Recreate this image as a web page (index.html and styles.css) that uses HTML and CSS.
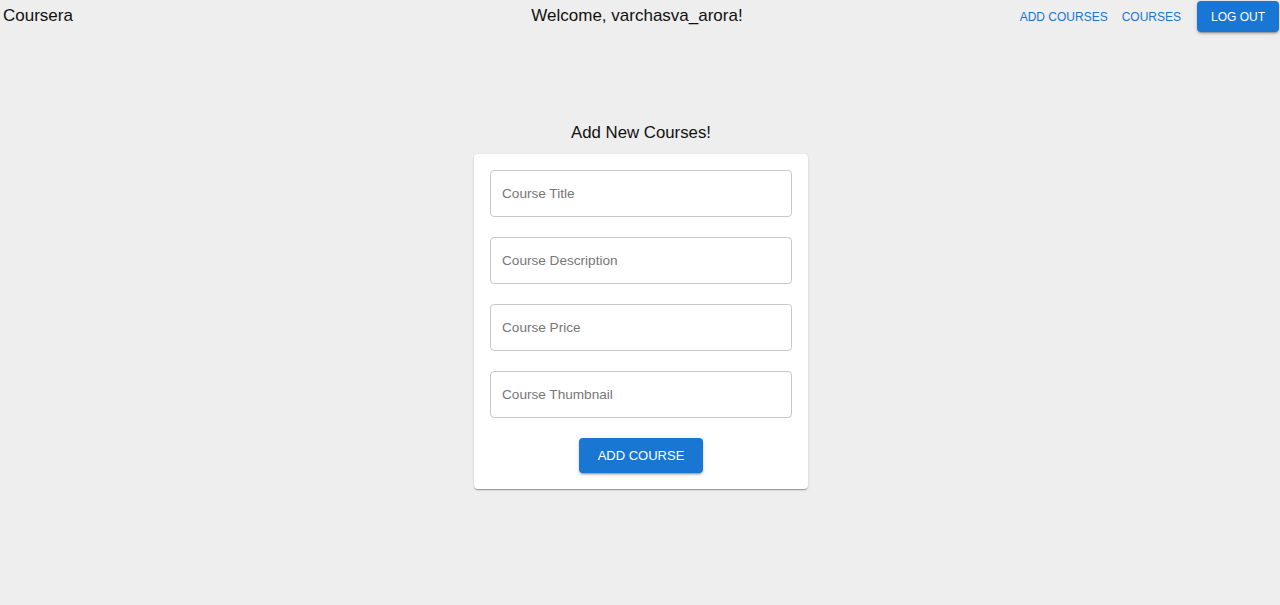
FILE: index.html
```html
<!DOCTYPE html>
<html lang="en">
<head>
<meta charset="utf-8">
<title>Coursera - Add Course</title>
<link rel="stylesheet" href="styles.css">
</head>
<body>
<header class="topbar">
  <div class="brand">Coursera</div>
  <div class="welcome">Welcome, varchasva_arora!</div>
  <nav class="nav">
    <a class="nav-link" href="#">ADD COURSES</a>
    <a class="nav-link" href="#">COURSES</a>
    <button class="btn btn-logout" type="button">LOG OUT</button>
  </nav>
</header>
<main class="main">
  <h1 class="title">Add New Courses!</h1>
  <form class="card">
    <input class="field" type="text" placeholder="Course Title">
    <input class="field" type="text" placeholder="Course Description">
    <input class="field" type="text" placeholder="Course Price">
    <input class="field" type="text" placeholder="Course Thumbnail">
    <div class="actions">
      <button class="btn btn-add" type="button">ADD COURSE</button>
    </div>
  </form>
</main>
</body>
</html>
```

FILE: styles.css
```css
html, body {
  margin: 0;
  padding: 0;
}
body {
  background: #eeeeee;
  font-family: "Liberation Sans", Arial, sans-serif;
  color: #111;
  min-height: 605px;
}
.topbar {
  display: grid;
  grid-template-columns: 1fr auto 1fr;
  align-items: baseline;
  padding: 1px 1px 0 3px;
  height: 31px;
}
.brand {
  font-size: 17px;
  justify-self: start;
}
.welcome {
  font-size: 17px;
  margin-right: 8px;
}
.nav {
  justify-self: end;
  display: flex;
  align-items: baseline;
}
.nav-link {
  font-size: 12px;
  color: #1976d2;
  text-decoration: none;
  padding: 0 7px;
}
.btn {
  font-family: "Liberation Sans", Arial, sans-serif;
  border: none;
  background: #1976d2;
  color: #fff;
  border-radius: 4px;
  cursor: pointer;
  box-shadow: 0 3px 1px -2px rgba(0,0,0,0.2), 0 2px 2px 0 rgba(0,0,0,0.14), 0 1px 5px 0 rgba(0,0,0,0.12);
}
.btn-logout {
  font-size: 12px;
  height: 31px;
  line-height: 30px;
  padding: 1px 14px 0;
  width: 82px;
  margin-left: 9px;
}
.main {
  display: flex;
  flex-direction: column;
  align-items: center;
  padding-top: 89px;
}
.title {
  margin: 0 0 9px 2px;
  font-size: 16.8px;
  font-weight: normal;
  line-height: 24px;
}
.card {
  margin-left: 2px;
  background: #fff;
  width: 302px;
  padding: 16px;
  border-radius: 4px;
  display: flex;
  flex-direction: column;
  gap: 20px;
  box-shadow: 0 2px 1px -1px rgba(0,0,0,0.2), 0 1px 1px 0 rgba(0,0,0,0.14), 0 1px 3px 0 rgba(0,0,0,0.12);
}
.field {
  box-sizing: border-box;
  width: 100%;
  height: 47px;
  margin: 0;
  border: 1px solid #c8c8c8;
  border-radius: 4px;
  padding: 0 11px;
  font-family: "Liberation Sans", Arial, sans-serif;
  font-size: 13.6px;
  color: #222;
  background: #fff;
  outline: none;
}
.field::placeholder {
  color: #777;
  opacity: 1;
}
.actions {
  display: flex;
  justify-content: center;
}
.btn-add {
  font-size: 13px;
  height: 35px;
  padding: 0 18px;
  width: 124px;
}
```
